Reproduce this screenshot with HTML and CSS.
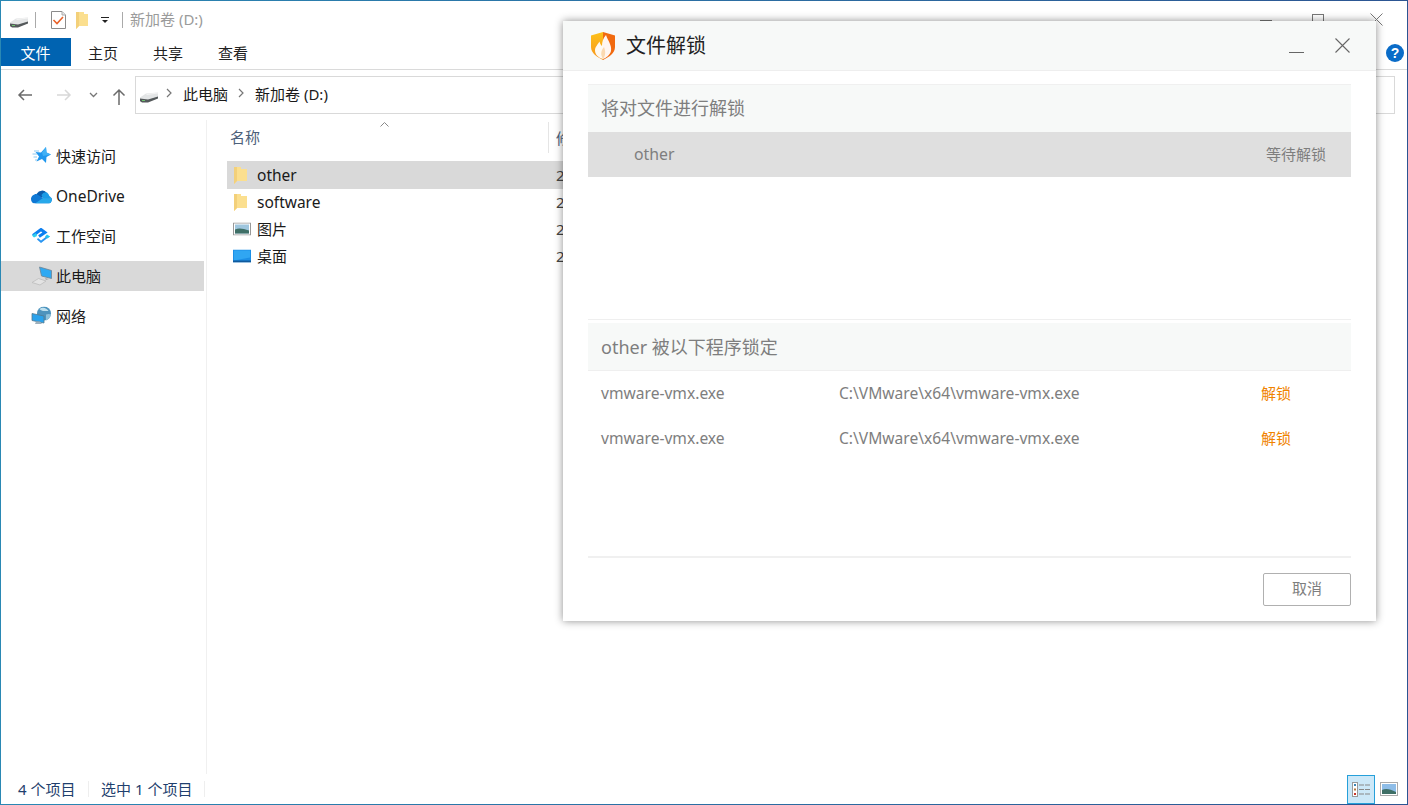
FILE: index.html
```html
<!DOCTYPE html>
<html lang="zh-CN">
<head>
<meta charset="utf-8">
<title>新加卷 (D:)</title>
<link rel="stylesheet" href="styles.css">
</head>
<body>
<div class="window">
  <header class="titlebar">
    <svg class="ic-drive" width="20" height="12" viewBox="0 0 20 12"><path d="M1 6.500L7 2.500L19 1.500V7L9 11H1Z" fill="#e3e5e6"/><path d="M1 7.500L9 8.500L19 5.500V7.500L9 11.500H3L1 10Z" fill="#54595b"/><path d="M7 3L19 1.500V2.500L8 4Z" fill="#f4f4f4"/><rect x="3" y="9" width="3" height="1" fill="#6fc46f"/></svg>
    <span class="tb-sep"></span>
    <svg class="ic-check" width="15" height="18" viewBox="0 0 15 18"><path d="M.5.5H11L14.500 4V17.500H.5Z" fill="#fff" stroke="#8b8b8b"/><path d="M11 .5V4H14.500" fill="#e8e8e8" stroke="#aaa"/><path d="M2.500 9 L6 12.500 L12 6" fill="none" stroke="#e8622a" stroke-width="1.600"/></svg>
    <svg class="ic-tbfolder" width="13" height="18" viewBox="0 0 13 18"><path d="M0 1H8V3H12V15H3L0 18Z" fill="#fbdf8f"/><path d="M0 1H3V15L0 18Z" fill="#f3d07a"/></svg>
    <svg class="ic-drop" width="8" height="7" viewBox="0 0 8 7"><rect x="0" y="0" width="8" height="1" fill="#222"/><path d="M1 3H7L4 6Z" fill="#222"/></svg>
    <span class="tb-sep tb-sep2"></span>
    <span class="tb-title">新加卷 (D:)</span>
    <div class="win-ctrls">
      <span class="ctl-min"></span>
      <span class="ctl-max"></span>
      <svg width="13" height="13" viewBox="0 0 13 13"><path d="M.5.5L12.500 12.500M12.500.5L.5 12.500" stroke="#777" fill="none"/></svg>
    </div>
  </header>

  <nav class="ribbon">
    <span class="tab tab-file">文件</span>
    <span class="tab">主页</span>
    <span class="tab">共享</span>
    <span class="tab">查看</span>
    <span class="help">?</span>
  </nav>

  <div class="addrbar">
    <svg class="ar ar-back" width="16" height="14" viewBox="0 0 16 14"><path d="M15 7H2M7 2L2 7L7 12" fill="none" stroke="#6b6b6b" stroke-width="1.500"/></svg>
    <svg class="ar ar-fwd" width="16" height="14" viewBox="0 0 16 14"><path d="M1 7H14M9 2L14 7L9 12" fill="none" stroke="#d8d8d8" stroke-width="1.500"/></svg>
    <svg class="ar ar-down" width="9" height="6" viewBox="0 0 9 6"><path d="M1 1L4.500 4.500L8 1" fill="none" stroke="#777" stroke-width="1.300"/></svg>
    <svg class="ar ar-up" width="14" height="17" viewBox="0 0 14 17"><path d="M7 17V2M1.500 7.500L7 2L12.500 7.500" fill="none" stroke="#6b6b6b" stroke-width="1.500"/></svg>
    <div class="addrbox">
      <svg class="ic-drive" width="20" height="12" viewBox="0 0 20 12"><path d="M1 6.500L7 2.500L19 1.500V7L9 11H1Z" fill="#e3e5e6"/><path d="M1 7.500L9 8.500L19 5.500V7.500L9 11.500H3L1 10Z" fill="#54595b"/><path d="M7 3L19 1.500V2.500L8 4Z" fill="#f4f4f4"/><rect x="3" y="9" width="3" height="1" fill="#6fc46f"/></svg>
      <svg class="crumb-arrow" width="6" height="10" viewBox="0 0 6 10"><path d="M1 1L5 5L1 9" fill="none" stroke="#777" stroke-width="1.200"/></svg>
      <span class="crumb">此电脑</span>
      <svg class="crumb-arrow" width="6" height="10" viewBox="0 0 6 10"><path d="M1 1L5 5L1 9" fill="none" stroke="#777" stroke-width="1.200"/></svg>
      <span class="crumb">新加卷 (D:)</span>
    </div>
  </div>

  <div class="main">
    <aside class="nav">
      <div class="nav-item">
        <svg class="nav-ic" width="22" height="20" viewBox="0 0 22 20"><path d="M15 1L15.500 6.500L20 8.500L15.500 11L15 17L11 13L5.500 15.500L8 10.500L4.500 6L10 6.500Z" fill="#1f97ee"/><path d="M11 6.500L15 1L15.500 6.500L20 8.500L12 10Z" fill="#3fb0f5"/><path d="M3 5H8M1.500 8H6M2.500 11H6M4 14H6" stroke="#8cc8f0"/></svg>
        <span>快速访问</span>
      </div>
      <div class="nav-item">
        <svg class="nav-ic" width="21" height="15" viewBox="0 0 21 15"><path d="M6 5A6 6 0 0 1 15.500 4L12 9L5 8Z" fill="#0a5cad"/><path d="M10.500 6.500A5 5 0 0 1 16 4C17 5 18 6 18 7L21 10L12 10Z" fill="#1a9be6"/><path d="M5.500 5.500L12 9.500L21 10C21 13 19.500 15 17.500 15H4C1.500 15 0 13 0 10.500C0 8 2.500 5.500 5.500 5.500Z" fill="#0f78d4"/><path d="M12 9.500L21 10C21 13 19.500 15 17.500 15H4L12 9.500Z" fill="#27a8ea"/></svg>
        <span class="latin nav-latin">OneDrive</span>
      </div>
      <div class="nav-item">
        <svg class="nav-ic" width="20" height="16" viewBox="0 0 20 16"><path d="M2 7.500L10 1.500L14 4.500L8 8.500" fill="none" stroke="#0d7ff0" stroke-width="3"/><path d="M1 7.500L5 5L6 8L3 9.500Z" fill="#2fd0ee"/><path d="M7 10L10 12.500L16 8L19 8L10 15L6 11.500Z" fill="#2a96f2"/><path d="M16 6.500L19 8.500L16.500 10.500L14 8.500Z" fill="#26c4ee"/></svg>
        <span>工作空间</span>
      </div>
      <div class="nav-item is-active">
        <svg class="nav-ic" width="22" height="20" viewBox="0 0 22 20"><path d="M8.500 1L20.500 4.500V12.500L10.500 10Z" fill="#2fa9f2" stroke="#6d8494" stroke-width=".800"/><path d="M14 12L18 13L15 14Z" fill="#a8a8a8"/><path d="M1 16.500L7.500 12.500L15 15L9 19Z" fill="#e3e3e3" stroke="#bdbdbd" stroke-width=".800"/></svg>
        <span>此电脑</span>
      </div>
      <div class="nav-item">
        <svg class="nav-ic" width="21" height="19" viewBox="0 0 21 19"><circle cx="13" cy="7" r="7" fill="#4d93bd"/><path d="M8.500 2.500C11.500 0 16 1.500 17.500 4.500C14 4 11 5.500 8.500 2.500Z" fill="#bfe0ee"/><path d="M15 8C17 7 19 7.500 20 8C19.500 11 17 13.500 15 14Z" fill="#8fc1da"/><path d="M1 7L13 9.500V16.500L1 14Z" fill="#2aa2ec" stroke="#53788e" stroke-width=".800"/><path d="M4 17.500H11L9 15H5Z" fill="#9eb0bc"/></svg>
        <span>网络</span>
      </div>
    </aside>

    <section class="files">
      <div class="col-head">
        <div class="col-name">名称<svg class="sort" width="9" height="5" viewBox="0 0 9 5"><path d="M.5 4.500L4.500 .5L8.500 4.500" fill="none" stroke="#888"/></svg></div>
        <div class="col-date">修改日期</div>
      </div>
      <div class="file is-selected">
        <svg class="file-ic" width="13" height="18" viewBox="0 0 13 18"><path d="M0 1H7V3H13V15H3L0 18Z" fill="#fbdf8f"/><path d="M0 1H3V15L0 18Z" fill="#f3d07a"/></svg>
        <span class="file-name latin">other</span><span class="file-date">2</span>
      </div>
      <div class="file">
        <svg class="file-ic" width="13" height="18" viewBox="0 0 13 18"><path d="M0 1H7V3H13V15H3L0 18Z" fill="#fbdf8f"/><path d="M0 1H3V15L0 18Z" fill="#f3d07a"/></svg>
        <span class="file-name latin">software</span><span class="file-date">2</span>
      </div>
      <div class="file">
        <svg class="file-ic file-ic-wide" width="18" height="13" viewBox="0 0 18 13"><rect x=".5" y=".5" width="17" height="12" fill="#fff" stroke="#999"/><rect x="2" y="2" width="14" height="9" fill="#9fc6de"/><path d="M2 7C6 5 10 6 16 8V11H2Z" fill="#3f6f66"/></svg>
        <span class="file-name">图片</span><span class="file-date">2</span>
      </div>
      <div class="file">
        <svg class="file-ic file-ic-wide" width="18" height="13" viewBox="0 0 18 13"><rect width="18" height="13" fill="#1c8fe6"/><path d="M1 1H17V8L1 11Z" fill="#30a6f2"/><rect y="11" width="18" height="2" fill="#115a9c"/></svg>
        <span class="file-name">桌面</span><span class="file-date">2</span>
      </div>
    </section>
  </div>

  <footer class="status">
    <span class="st st-count">4 个项目</span>
    <span class="st st-sel">选中 1 个项目</span>
    <div class="views">
      <span class="view-btn">
        <svg width="19" height="15" viewBox="0 0 19 15"><rect x=".5" y=".5" width="5" height="14" fill="#fff" stroke="#999"/><rect x="2" y="2" width="2" height="2" fill="#3a87b8"/><rect x="2" y="6.500" width="2" height="2" fill="#b07840"/><rect x="2" y="11" width="2" height="2" fill="#c8382c"/><path d="M7 3H12M13 3H18M7 7.500H12M13 7.500H18M7 12H12M13 12H18" stroke="#888"/></svg>
      </span>
      <svg class="view-pic" width="18" height="14" viewBox="0 0 18 14"><rect x=".5" y=".5" width="17" height="13" fill="#fff" stroke="#aaa"/><rect x="2" y="2" width="14" height="10" fill="#8ebde8"/><path d="M2 8C6 6 10 7 16 10V12H2Z" fill="#3f6f66"/></svg>
    </div>
  </footer>

  <div class="dialog">
    <div class="dlg-head">
      <svg class="dlg-logo" width="24" height="28" viewBox="0 0 24 28"><defs><linearGradient id="sh" x1="0" y1="0" x2="0" y2="1"><stop offset="0" stop-color="#fdc21a"/><stop offset="1" stop-color="#f7941d"/></linearGradient></defs><path d="M0 3.500L12 0V28C6 25 0 21 0 15Z" fill="url(#sh)"/><path d="M12 0L24 3.500V15C24 21 18 25 12 28Z" fill="#f16a10"/><path d="M15 3C17 9 21 13 20 19C19 23 15 26 12 27C8 26 4 23 4 18.500C4 14.500 7 12.500 8.500 9.500C9 11.500 10 13 11 14C11 10 12 6 15 3Z" fill="#fff" fill-opacity=".94"/><path d="M12 27C9.500 23 9.500 19 13 15C14.500 19 15 23 12 27Z" fill="#fbd9b0"/></svg>
      <h1 class="dlg-title">文件解锁</h1>
      <span class="dlg-min"></span>
      <svg class="dlg-close" width="15" height="15" viewBox="0 0 15 15"><path d="M.5.5L14.500 14.500M14.500.5L.5 14.500" stroke="#666" fill="none" stroke-width="1.100"/></svg>
    </div>
    <div class="dlg-body">
      <div class="panel-head panel-top">将对文件进行解锁</div>
      <div class="target-row"><span class="target-name">other</span><span class="target-state">等待解锁</span></div>
      <div class="panel-space"></div>
      <div class="panel-head panel-locked">other 被以下程序锁定</div>
      <div class="proc-row"><span class="proc-name">vmware-vmx.exe</span><span class="proc-path">C:\VMware\x64\vmware-vmx.exe</span><span class="proc-act">解锁</span></div>
      <div class="proc-row"><span class="proc-name">vmware-vmx.exe</span><span class="proc-path">C:\VMware\x64\vmware-vmx.exe</span><span class="proc-act">解锁</span></div>
      <div class="dlg-foot"><button class="btn-cancel" type="button">取消</button></div>
    </div>
  </div>
</div>
</body>
</html>
```
FILE: styles.css
```css
* { box-sizing: border-box; }
html, body { margin: 0; height: 100%; overflow: hidden; background: #fff; }
body { font-family: "Noto Sans", "Noto Sans CJK SC", sans-serif; font-size: 15px; color: #1a1a1a; }
.latin { font-size: 15.500px; }
.nav-latin { padding-top: 2px; }

.window {
  position: relative;
  width: 1408px;
  height: 805px;
  border: 1px solid;
  border-image: linear-gradient(to right, #2a88b4, #2c5592) 1;
  display: flex;
  flex-direction: column;
  overflow: hidden;
}

/* title bar */
.titlebar { height: 37px; display: flex; align-items: center; padding-left: 9px; flex: none; }
.titlebar > .ic-drive { margin-top: 4px; margin-left: -1px; }
.tb-sep { width: 1px; height: 16px; background: #aaa; margin-left: 6px; margin-right: 15px; }
.ic-check { margin-right: 11px; }
.ic-tbfolder { margin-right: 12px; margin-left: -1px; }
.ic-drop { margin-top: 2px; }
.tb-sep2 { margin-left: 13px; margin-right: 7px; }
.tb-title { color: #9b9b9b; padding-bottom: 2px; }
.win-ctrls { margin-left: auto; display: flex; align-items: center; margin-right: 24px; gap: 40px; }
.ctl-min { width: 12px; height: 1px; background: #777; margin-top: 1px; }
.ctl-max { width: 12px; height: 12px; border: 1px solid #777; margin-right: 6px; }

/* ribbon */
.ribbon { height: 32px; flex: none; display: flex; align-items: flex-start; border-bottom: 1px solid #dadada; position: relative; }
.tab { width: 65px; height: 28px; line-height: 30px; text-align: center; color: #222; padding-right: 1px; }
.tab-file { width: 70px; background: #0063b1; color: #fff; }
.help { position: absolute; right: 3px; top: 6px; width: 18px; height: 18px; border-radius: 50%; background: #0a6cc8; color: #fff; font: bold 14px/18px "Liberation Sans", sans-serif; text-align: center; }

/* address row */
.addrbar { height: 50px; flex: none; display: flex; align-items: center; position: relative; padding-left: 16px; }
.ar { flex: none; }
.ar-fwd { margin-left: 23px; }
.ar-down { margin-left: 17px; }
.ar-up { margin-left: 14px; margin-top: 3px; }
.addrbox { margin-left: 9px; width: 1260px; height: 38px; border: 1px solid #d9d9d9; display: flex; align-items: center; padding-left: 3px; margin-top: -1px; flex: none; }
.addrbox .ic-drive { margin-top: 4px; }
.crumb-arrow { margin-left: 7px; margin-top: -3px; }
.crumb { color: #1a1a1a; padding-bottom: 3px; }
.crumb + .crumb-arrow { margin-left: 10px; }
.crumb-arrow + .crumb { margin-left: 11px; }

/* main */
.main { flex: 1; display: flex; min-height: 0; }
.nav { width: 206px; flex: none; border-right: 1px solid #f0f0f0; padding-top: 21px; display: flex; flex-direction: column; gap: 10px; }
.nav-item { height: 30px; width: 203px; display: flex; align-items: center; position: relative; padding: 0 0 2px 55px; color: #1a1a1a; }
.nav-item.is-active { background: #d9d9d9; }
.nav-ic { position: absolute; left: 30px; top: 50%; transform: translateY(-50%); }

.files { flex: 1; padding-top: 2px; padding-left: 20px; }
.col-head { height: 31px; display: flex; align-items: center; color: #4c607a; }
.col-name { width: 322px; padding-left: 3px; height: 31px; line-height: 30px; border-right: 1px solid #e5e5e5; position: relative; }
.sort { position: absolute; left: 153px; top: 0; }
.col-date { padding-left: 7px; }
.file { height: 27px; display: flex; align-items: center; position: relative; padding-left: 30px; width: 1000px; }
.col-head + .file { margin-top: 8px; height: 28px; margin-bottom: -1px; }
.file.is-selected { background: #d9d9d9; }
.file-ic { position: absolute; left: 7px; top: 50%; transform: translateY(-50%); }
.file-ic-wide { left: 6px; }
.file-name { width: 299px; }
.file-date { color: #444; }

/* status bar */
.status { height: 30px; flex: none; display: flex; align-items: center; position: relative; color: #1f3f6e; padding-left: 17px; }
.st-count { width: 71px; border-right: 1px solid #eee; height: 16px; line-height: 16px; }
.st-sel { margin-left: 12px; padding-right: 12px; border-right: 1px solid #eee; height: 16px; line-height: 16px; }
.views { margin-left: auto; display: flex; align-items: center; gap: 5px; margin-right: 9px; }
.view-btn { width: 28px; height: 29px; background: #cce8f8; border: 1px solid #26a0da; display: flex; align-items: center; justify-content: center; }

/* dialog */
.dialog {
  position: absolute;
  left: 562px;
  top: 20px;
  width: 813px;
  height: 600px;
  background: #fff;
  box-shadow: 0 0 8px rgba(0, 0, 0, .45);
  display: flex;
  flex-direction: column;
}
.dlg-head { height: 50px; flex: none; background: #f7f9f8; border-bottom: 1px solid #eeeeee; display: flex; align-items: center; padding-left: 28px; }
.dlg-logo { flex: none; margin-top: 1px; }
.dlg-title { font-size: 20px; font-weight: 400; color: #222; margin: 1px 0 0 11px; line-height: 1; }
.dlg-min { margin-left: auto; width: 15px; height: 1px; background: #666; margin-top: 13px; margin-right: 31px; }
.dlg-close { margin-right: 26px; }
.dlg-body { flex: 1; padding: 13px 25px 0; display: flex; flex-direction: column; }
.panel-head { background: #f7f9f8; color: #7e7e7e; font-size: 18px; padding-left: 13px; display: flex; align-items: center; flex: none; }
.panel-top { height: 48px; border-top: 1px solid #f0f0f0; padding-bottom: 3px; }
.target-row { height: 45px; flex: none; background: #dfdfdf; display: flex; align-items: center; padding: 0 25px 2px 46px; color: #7e7e7e; font-size: 15.800px; }
.target-state { margin-left: auto; font-size: 15px; }
.panel-space { height: 143px; flex: none; border-bottom: 1px solid #efefef; }
.panel-locked { height: 48px; margin-top: 3px; border-bottom: 1px solid #efefef; padding-bottom: 2px; }
.proc-row { height: 45px; flex: none; display: flex; align-items: center; padding: 0 0 2px 13px; color: #7e7e7e; font-size: 15.600px; }
.proc-name { width: 238px; }
.proc-path { width: 422px; }
.proc-act { color: #f08300; font-size: 15px; padding-bottom: 1px; }
.dlg-foot { margin-top: 95px; border-top: 2px solid #f0f0f0; padding-top: 15px; display: flex; justify-content: flex-end; }
.btn-cancel { width: 88px; height: 33px; background: #fff; border: 1px solid #b0b0b0; border-radius: 2px; color: #7e7e7e; font: inherit; padding: 0 0 4px; }
```
